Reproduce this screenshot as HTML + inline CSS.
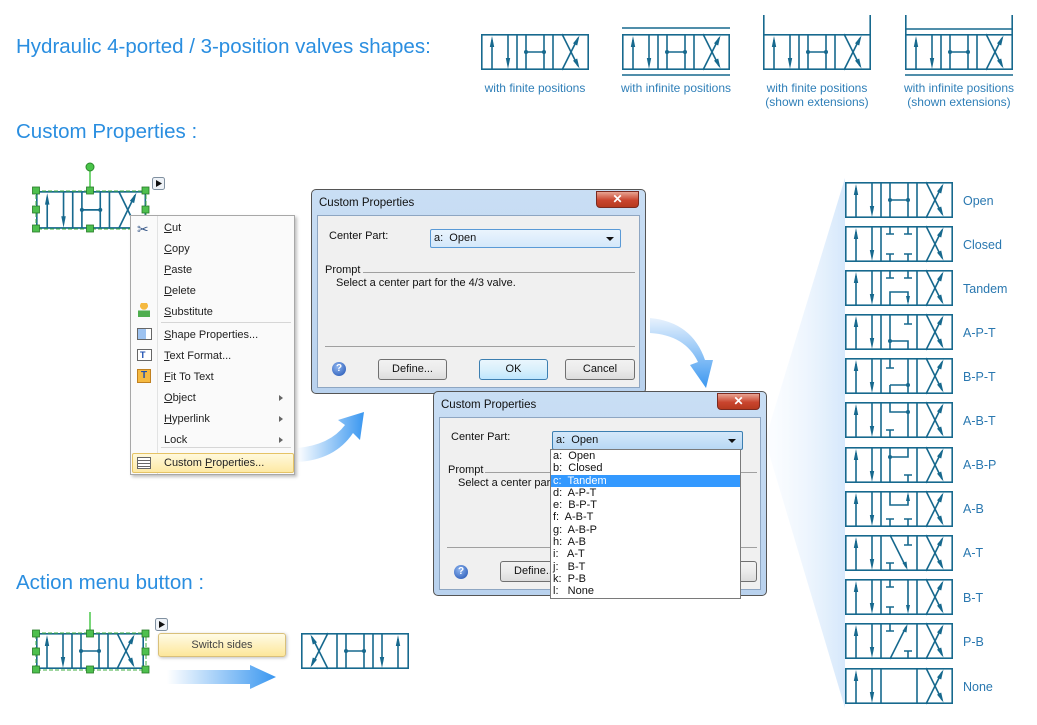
<!DOCTYPE html>
<html><head><meta charset="utf-8"><style>
*{margin:0;padding:0;box-sizing:border-box}
body{width:1037px;height:725px;overflow:hidden;background:#fff;position:relative;font-family:"Liberation Sans",sans-serif}
.abs{position:absolute}
.h{color:#2a8ee0;font-size:20.5px;white-space:nowrap}
.lbl{color:#2f7fb8;font-size:12px;text-align:center;line-height:14px;white-space:nowrap}
.rl{color:#2a78b0;font-size:12.5px;white-space:nowrap}
.menu{left:130px;top:215px;width:165px;height:260px;background:#fafafa;border:1px solid #a8a8a8;box-shadow:2px 2px 3px rgba(0,0,0,.25);font-size:11px;color:#222}
.menu .it{position:absolute;left:33px}
.menu .ar{position:absolute;left:148px;width:0;height:0;border-left:4px solid #666;border-top:3.5px solid transparent;border-bottom:3.5px solid transparent}
.dlg{background:linear-gradient(#c9def4,#b9d2ee);border:1px solid #555;border-radius:5px;font-size:11px;color:#111}
.dlg .tt{position:absolute;left:7px;top:7px;font-size:11.5px}
.dlg .x{position:absolute;right:6px;top:1px;width:43px;height:17px;border-radius:0 0 4px 4px;background:linear-gradient(#e8a493,#c9452e 55%,#b6391f);border:1px solid #7a2a20;color:#fff;font-weight:bold;font-size:12px;text-align:center;line-height:15px}
.dlg .pn{position:absolute;left:5px;top:25px;right:5px;bottom:5px;background:#f0f0f0;border:1px solid #8ea6c2}
.btn{position:absolute;height:21px;border:1px solid #707070;border-radius:3px;background:linear-gradient(#f2f2f2,#ebebeb 50%,#dcdcdc);text-align:center;line-height:19px;font-size:11px}
.combo{position:absolute;height:19px;border:1px solid #5a9ad6;border-radius:2px;background:linear-gradient(#eaf4fd,#d4e8fa);padding-left:3px;line-height:17px}
.combo:after{content:"";position:absolute;right:6px;top:7px;border-top:4px solid #111;border-left:4px solid transparent;border-right:4px solid transparent}
.help{position:absolute;width:14px;height:14px;border-radius:50%;background:radial-gradient(circle at 40% 35%,#8fb6f0,#1d4fb0);color:#fff;font-size:10px;font-weight:bold;text-align:center;line-height:14px}
</style></head><body>
<svg class="abs" style="left:0;top:0" width="1037" height="725" viewBox="0 0 1037 725">
<defs>
<linearGradient id="wg" x1="1" y1="0" x2="0" y2="0"><stop offset="0" stop-color="#d6e8fb"/><stop offset="1" stop-color="#f4f9ff" stop-opacity="0.3"/></linearGradient>
<linearGradient id="ag" x1="0" y1="0" x2="1" y2="0"><stop offset="0" stop-color="#ffffff"/><stop offset="1" stop-color="#3a97f0"/></linearGradient>
<linearGradient id="ag2" x1="0" y1="0" x2="0" y2="1"><stop offset="0" stop-color="#e8f2fd"/><stop offset="1" stop-color="#3a97f0"/></linearGradient>
<g id="base" fill="none" stroke="#17698e" stroke-width="1.6">
<rect x="0.8" y="0.8" width="106.4" height="34.4"/>
<line x1="36" y1="0" x2="36" y2="36"/><line x1="72" y1="0" x2="72" y2="36"/>
<line x1="11" y1="36" x2="11" y2="6"/><line x1="27" y1="0" x2="27" y2="30"/>
<line x1="81" y1="36" x2="97" y2="4"/><line x1="81" y1="0" x2="97" y2="32"/>
<g fill="#17698e" stroke="none">
<polygon points="11,2 8.8,13 13.2,13"/><polygon points="27,35 24.8,24 29.2,24"/>
<polygon points="98.5,1.5 96.2,11.5 92,9.4"/><polygon points="98.5,34.5 92,26.6 96.2,24.5"/>
</g></g>
<g id="open"><use href="#base"/><g stroke="#17698e" stroke-width="1.6" fill="#17698e"><line x1="45" y1="0" x2="45" y2="36"/><line x1="63" y1="0" x2="63" y2="36"/><line x1="45" y1="18" x2="63" y2="18"/><circle cx="45" cy="18" r="2" stroke="none"/><circle cx="63" cy="18" r="2" stroke="none"/></g></g>
<g id="c_closed"><use href="#base"/><path d="M45 0V8M41 8H49M63 0V8M59 8H67M45 36V28M41 28H49M63 36V28M59 28H67" stroke="#17698e" stroke-width="1.6" fill="none"/></g>
<g id="c_tandem"><use href="#base"/><path d="M45 0V8M41 8H49M63 0V8M59 8H67M45 36V22H63V32" stroke="#17698e" stroke-width="1.6" fill="none"/><polygon points="63,35 61,26 65,26" fill="#17698e"/></g>
<g id="c_apt"><use href="#base"/><path d="M45 0V36M45 27H63V36M63 0V10M59 10H67" stroke="#17698e" stroke-width="1.6" fill="none"/><circle cx="45" cy="27" r="2" fill="#17698e"/></g>
<g id="c_bpt"><use href="#base"/><path d="M63 0V36M45 27H63M45 36V27M45 0V10M41 10H49" stroke="#17698e" stroke-width="1.6" fill="none"/><circle cx="63" cy="27" r="2" fill="#17698e"/></g>
<g id="c_abt"><use href="#base"/><path d="M45 0V10H63M63 0V36M45 36V28M41 28H49" stroke="#17698e" stroke-width="1.6" fill="none"/><circle cx="63" cy="10" r="2" fill="#17698e"/></g>
<g id="c_abp"><use href="#base"/><path d="M45 0V36M45 10H63V0M63 36V28M59 28H67" stroke="#17698e" stroke-width="1.6" fill="none"/><circle cx="45" cy="10" r="2" fill="#17698e"/></g>
<g id="c_ab"><use href="#base"/><path d="M45 0V14H63V4M45 36V28M41 28H49M63 36V28M59 28H67" stroke="#17698e" stroke-width="1.6" fill="none"/><polygon points="63,1 61,10 65,10" fill="#17698e"/></g>
<g id="c_at"><use href="#base"/><path d="M45 0L61 32M63 0V10M59 10H67M45 36V28M41 28H49" stroke="#17698e" stroke-width="1.6" fill="none"/><polygon points="62.5,35 57.5,28 61.5,26.5" fill="#17698e"/></g>
<g id="c_bt"><use href="#base"/><path d="M45 0V8M41 8H49M45 36V28M41 28H49M63 0V31" stroke="#17698e" stroke-width="1.6" fill="none"/><polygon points="63,35 61,26 65,26" fill="#17698e"/></g>
<g id="c_pb"><use href="#base"/><path d="M45 0V8M41 8H49M45 36L61 4M63 36V28M59 28H67" stroke="#17698e" stroke-width="1.6" fill="none"/><polygon points="62.5,1 61.5,9.5 57.5,8" fill="#17698e"/></g>
<g id="c_none"><use href="#base"/></g>
</defs>
<polygon points="765,440 845,178 845,708" fill="url(#wg)"/>
<use href="#open" x="481" y="34"/>
<use href="#open" x="622" y="34"/>
<g stroke="#17698e" stroke-width="1.6"><line x1="622" y1="28" x2="730" y2="28"/><line x1="622" y1="75" x2="730" y2="75"/></g>
<use href="#open" x="763" y="34"/>
<g stroke="#17698e" stroke-width="1.6"><line x1="763.8" y1="15" x2="763.8" y2="34"/><line x1="870.2" y1="15" x2="870.2" y2="34"/></g>
<use href="#open" x="905" y="34"/>
<g stroke="#17698e" stroke-width="1.6"><line x1="905.8" y1="15" x2="905.8" y2="34"/><line x1="1012.2" y1="15" x2="1012.2" y2="34"/><line x1="905" y1="29" x2="1013" y2="29"/><line x1="905" y1="75" x2="1013" y2="75"/></g>
<use href="#open" x="845" y="182"/>
<use href="#c_closed" x="845" y="226"/>
<use href="#c_tandem" x="845" y="270"/>
<use href="#c_apt" x="845" y="314"/>
<use href="#c_bpt" x="845" y="358"/>
<use href="#c_abt" x="845" y="402"/>
<use href="#c_abp" x="845" y="447"/>
<use href="#c_ab" x="845" y="491"/>
<use href="#c_at" x="845" y="535"/>
<use href="#c_bt" x="845" y="579"/>
<use href="#c_pb" x="845" y="623"/>
<use href="#c_none" x="845" y="668"/>
<use href="#open" x="36" y="191" transform="translate(36 191) scale(1.02 1.05) translate(-36 -191)"/>
<rect x="36" y="191" width="110" height="38" fill="none" stroke="#3fae3f" stroke-width="1" stroke-dasharray="4 2"/>
<line x1="90" y1="168" x2="90" y2="191" stroke="#2fbf2f" stroke-width="1.3"/>
<circle cx="90" cy="167" r="4" fill="#49c449" stroke="#2a8a2a"/>
<g fill="#4ec04e" stroke="#267a26" stroke-width="0.8">
<rect x="32.5" y="187" width="7" height="7"/><rect x="86.5" y="187" width="7" height="7"/><rect x="142" y="187" width="7" height="7"/>
<rect x="32.5" y="206" width="7" height="7"/><rect x="142" y="206" width="7" height="7"/>
<rect x="32.5" y="225" width="7" height="7"/><rect x="86.5" y="225" width="7" height="7"/><rect x="142" y="225" width="7" height="7"/></g>
<rect x="152.5" y="177.5" width="12" height="12" rx="2" fill="#eef2f7" stroke="#8090a0"/><polygon points="156,180 162,183.5 156,187" fill="#111"/>
<use href="#open" x="36" y="633"/>
<rect x="36" y="633" width="110" height="37" fill="none" stroke="#3fae3f" stroke-width="1" stroke-dasharray="4 2"/>
<line x1="90" y1="612" x2="90" y2="633" stroke="#2fbf2f" stroke-width="1.3"/>
<g fill="#4ec04e" stroke="#267a26" stroke-width="0.8">
<rect x="32.5" y="630" width="7" height="7"/><rect x="86.5" y="630" width="7" height="7"/><rect x="142" y="630" width="7" height="7"/>
<rect x="32.5" y="648" width="7" height="7"/><rect x="142" y="648" width="7" height="7"/>
<rect x="32.5" y="666" width="7" height="7"/><rect x="86.5" y="666" width="7" height="7"/><rect x="142" y="666" width="7" height="7"/></g>
<rect x="155.5" y="618.5" width="12" height="12" rx="2" fill="#eef2f7" stroke="#8090a0"/><polygon points="159,621 165,624.5 159,628" fill="#111"/>
<use href="#open" x="-409" y="633" transform="scale(-1 1)"/>
<polygon points="167,670 250,670 250,665 276,677 250,689 250,684 167,684" fill="url(#ag)"/>
<path d="M297,448 Q330,445 345,425 L338,420 L364,412 L360,440 L353,433 Q335,460 297,462 Z" fill="url(#ag)"/>
<path d="M650,333 Q685,335 698,362 L690,365 L706,388 L713,360 L705,360 Q692,322 650,318 Z" fill="url(#ag2)"/>
</svg>

<div class="abs h" style="left:16px;top:35px">Hydraulic 4-ported / 3-position valves shapes:</div>
<div class="abs h" style="left:16px;top:120px">Custom Properties :</div>
<div class="abs h" style="left:16px;top:571px">Action menu button :</div>

<div class="abs lbl" style="left:470px;top:81px;width:130px">with finite positions</div>
<div class="abs lbl" style="left:611px;top:81px;width:130px">with infinite positions</div>
<div class="abs lbl" style="left:752px;top:81px;width:130px">with finite positions<br>(shown extensions)</div>
<div class="abs lbl" style="left:894px;top:81px;width:130px">with infinite positions<br>(shown extensions)</div>

<div class="abs rl" style="left:963px;top:194px">Open</div>
<div class="abs rl" style="left:963px;top:238px">Closed</div>
<div class="abs rl" style="left:963px;top:282px">Tandem</div>
<div class="abs rl" style="left:963px;top:326px">A-P-T</div>
<div class="abs rl" style="left:963px;top:370px">B-P-T</div>
<div class="abs rl" style="left:963px;top:414px">A-B-T</div>
<div class="abs rl" style="left:963px;top:458px">A-B-P</div>
<div class="abs rl" style="left:963px;top:502px">A-B</div>
<div class="abs rl" style="left:963px;top:546px">A-T</div>
<div class="abs rl" style="left:963px;top:591px">B-T</div>
<div class="abs rl" style="left:963px;top:635px">P-B</div>
<div class="abs rl" style="left:963px;top:680px">None</div>

<div class="abs menu">
<div class="abs" style="left:26px;top:0;width:1px;height:258px;background:#e2e3e3"></div>
<div class="abs" style="left:30px;top:106px;width:130px;height:1px;background:#d6d6d6"></div>
<div class="abs" style="left:30px;top:231px;width:130px;height:1px;background:#d6d6d6"></div>
<div class="abs" style="left:6px;top:5px;font-size:14px;color:#3a5a8a">✂</div>
<div class="abs" style="left:7px;top:87px;width:12px;height:14px;background:radial-gradient(circle at 50% 20%,#f5b940 30%,transparent 32%),linear-gradient(transparent 55%,#4fae4f 55%)"></div>
<div class="abs" style="left:6px;top:112px;width:15px;height:12px;border:1px solid #666;background:linear-gradient(90deg,#9ec3f0 60%,#fff 60%)"></div>
<div class="abs" style="left:6px;top:133px;width:15px;height:12px;border:1px solid #666;background:#fff;font-size:9px;font-weight:bold;color:#1d4fb0;line-height:10px;padding-left:2px">T</div>
<div class="abs" style="left:6px;top:153px;width:14px;height:14px;border:1px solid #c08020;background:#f5b940;font-size:10px;font-weight:bold;color:#1d4fb0;line-height:12px;text-align:center">T</div>
<div class="it" style="top:6px"><u>C</u>ut</div>
<div class="it" style="top:27px"><u>C</u>opy</div>
<div class="it" style="top:48px"><u>P</u>aste</div>
<div class="it" style="top:69px"><u>D</u>elete</div>
<div class="it" style="top:90px"><u>S</u>ubstitute</div>
<div class="it" style="top:113px"><u>S</u>hape Properties...</div>
<div class="it" style="top:134px"><u>T</u>ext Format...</div>
<div class="it" style="top:155px"><u>F</u>it To Text</div>
<div class="it" style="top:176px"><u>O</u>bject</div><div class="ar" style="top:179px"></div>
<div class="it" style="top:197px"><u>H</u>yperlink</div><div class="ar" style="top:200px"></div>
<div class="it" style="top:218px">Lock</div><div class="ar" style="top:221px"></div>
<div class="abs" style="left:1px;top:237px;width:162px;height:20px;border:1px solid #e5c365;border-radius:2px;background:linear-gradient(#fff9dc,#fde9a4)"></div>
<div class="abs" style="left:6px;top:241px;width:14px;height:12px;border:1px solid #666;background:repeating-linear-gradient(#fff 0 2px,#666 2px 3px)"></div>
<div class="it" style="top:241px">Custom <u>P</u>roperties...</div>
</div>

<div class="abs dlg" style="left:311px;top:189px;width:335px;height:205px">
<div class="tt">Custom Properties</div><div class="x">✕</div>
<div class="pn">
<div class="abs" style="left:11px;top:14px">Center Part:</div>
<div class="combo" style="left:112px;top:13px;width:191px">a:&nbsp; Open</div>
<div class="abs" style="left:7px;top:48px">Prompt</div>
<div class="abs" style="left:45px;top:56px;width:272px;height:1px;background:#a0a0a0"></div>
<div class="abs" style="left:18px;top:61px">Select a center part for the 4/3 valve.</div>
<div class="abs" style="left:7px;top:130px;width:310px;height:1px;background:#a0a0a0"></div>
<div class="help" style="left:14px;top:146px">?</div>
<div class="btn" style="left:60px;top:143px;width:69px">Define...</div>
<div class="btn" style="left:161px;top:143px;width:69px;border-color:#3c7fb1;background:linear-gradient(#eaf6fd,#d9f0fc 50%,#bee6fd)">OK</div>
<div class="btn" style="left:247px;top:143px;width:70px">Cancel</div>
</div></div>

<div class="abs dlg" style="left:433px;top:391px;width:334px;height:205px">
<div class="tt">Custom Properties</div><div class="x">✕</div>
<div class="pn">
<div class="abs" style="left:11px;top:13px">Center Part:</div>
<div class="combo" style="left:112px;top:13px;width:191px;background:linear-gradient(#d4e8fa,#b8d8f4);border-color:#3c7fb1">a:&nbsp; Open</div>
<div class="abs" style="left:8px;top:46px">Prompt</div>
<div class="abs" style="left:45px;top:54px;width:272px;height:1px;background:#a0a0a0"></div>
<div class="abs" style="left:18px;top:59px">Select a center part f</div>
<div class="abs" style="left:7px;top:129px;width:310px;height:1px;background:#a0a0a0"></div>
<div class="help" style="left:14px;top:147px">?</div>
<div class="btn" style="left:60px;top:143px;width:69px">Define...</div>
<div class="btn" style="left:247px;top:143px;width:70px"></div>
</div></div>
<div class="abs" style="left:550px;top:449px;width:191px;height:150px;background:#fff;border:1px solid #7a7a7a;font-size:11px;line-height:12.3px;color:#111">
<div style="padding-left:2px">a:&nbsp; Open</div>
<div style="padding-left:2px">b:&nbsp; Closed</div>
<div style="padding-left:2px;background:#3399ff;color:#fff">c:&nbsp; Tandem</div>
<div style="padding-left:2px">d:&nbsp; A-P-T</div>
<div style="padding-left:2px">e:&nbsp; B-P-T</div>
<div style="padding-left:2px">f:&nbsp; A-B-T</div>
<div style="padding-left:2px">g:&nbsp; A-B-P</div>
<div style="padding-left:2px">h:&nbsp; A-B</div>
<div style="padding-left:2px">i:&nbsp;&nbsp; A-T</div>
<div style="padding-left:2px">j:&nbsp;&nbsp; B-T</div>
<div style="padding-left:2px">k:&nbsp; P-B</div>
<div style="padding-left:2px">l:&nbsp;&nbsp; None</div>
</div>

<div class="abs" style="left:158px;top:633px;width:128px;height:24px;border:1px solid #d9c07a;border-radius:3px;background:linear-gradient(#fffbe6,#fde79a);box-shadow:1px 1px 3px rgba(0,0,0,.25);font-size:11px;color:#444;text-align:center;line-height:22px">Switch sides</div>
</body></html>
